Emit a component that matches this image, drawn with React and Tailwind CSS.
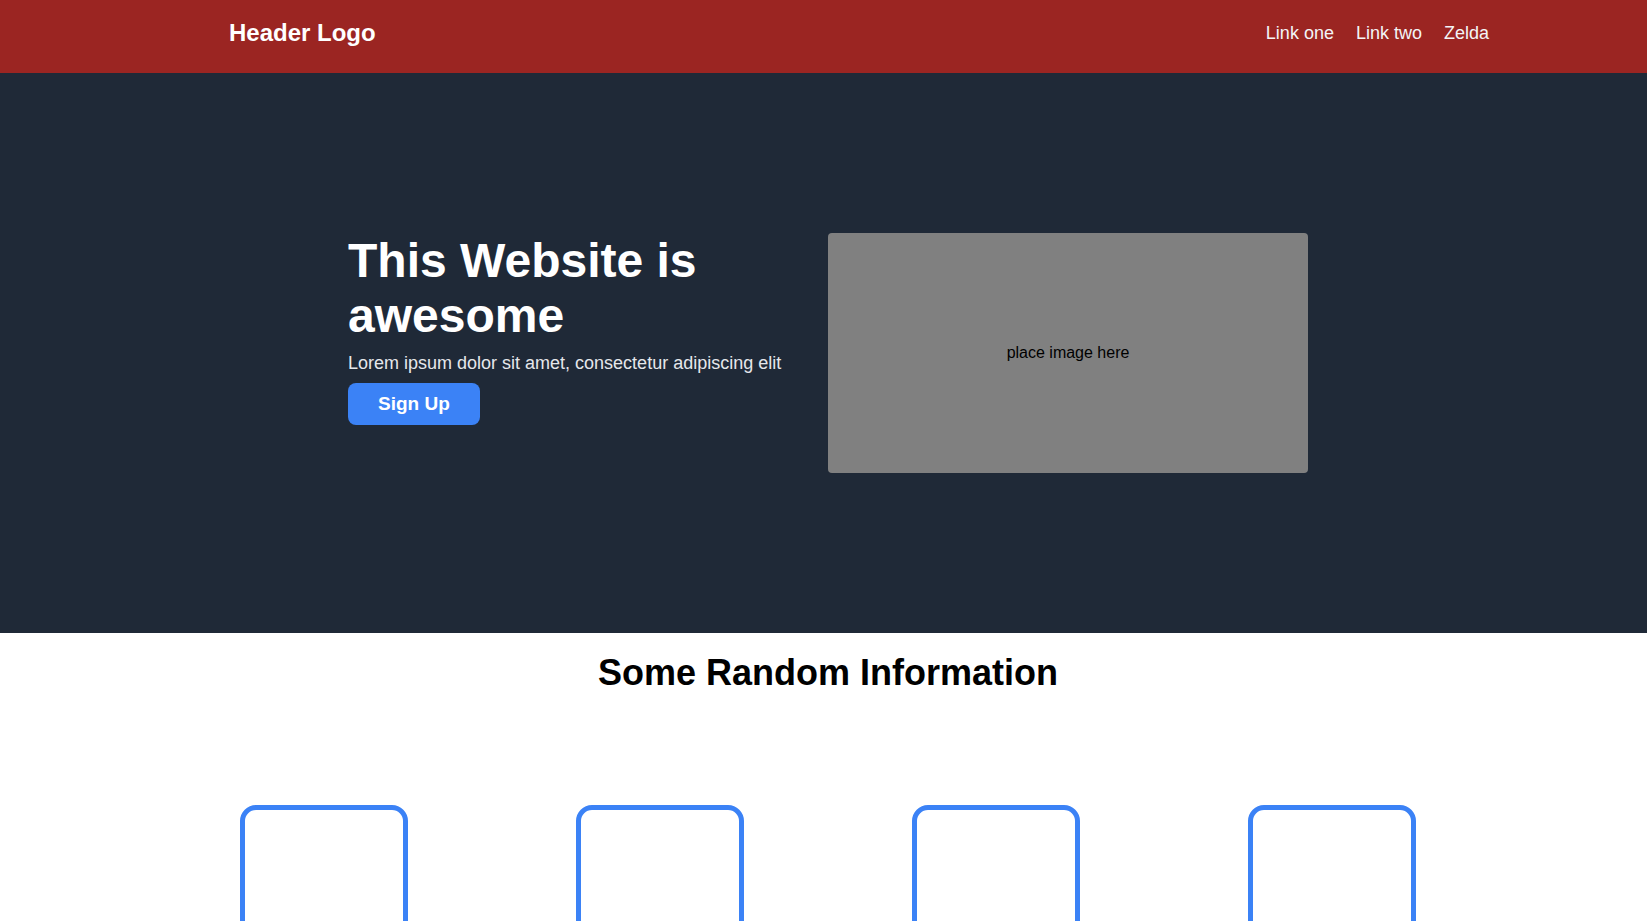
const links = ["Link one", "Link two", "Zelda"];

function Header() {
  return (
    <header className="flex h-[73px] items-start justify-between bg-[#9b2522] pl-[229px] pr-[158px] pt-[19px]">
      <div className="text-2xl leading-[28px] font-bold text-white">Header Logo</div>
      <nav className="flex gap-[22px]">
        {links.map(link => (
          <a key={link} href="#" className="text-lg leading-[28px] text-gray-100">
            {link}
          </a>
        ))}
      </nav>
    </header>
  );
}

function Hero() {
  return (
    <section className="flex h-[560px] items-center justify-center bg-[#1f2937] pl-[9px]">
      <div className="flex w-[960px] items-start justify-between">
        <div className="flex w-[460px] flex-col items-start">
          <h1 className="text-[48px] leading-[1.15] font-bold text-white">
            This Website is awesome
          </h1>
          <p className="mt-[6px] text-lg leading-[28px] text-gray-200">
            Lorem ipsum dolor sit amet, consectetur adipiscing elit
          </p>
          <button className="mt-[6px] rounded-lg bg-[#3b82f6] px-[30px] py-[10px] text-[19px] leading-[22px] font-bold text-white">
            Sign Up
          </button>
        </div>
        <div className="flex h-[240px] w-[480px] items-center justify-center rounded bg-[#808080] text-base text-black">
          place image here
        </div>
      </div>
    </section>
  );
}

function Info() {
  return (
    <section className="flex flex-col items-center bg-white pl-[9px]">
      <h2 className="mt-5 text-4xl font-bold text-black">Some Random Information</h2>
      <div className="mt-[112px] grid w-[1344px] grid-cols-4">
        {[1, 2, 3, 4].map(i => (
          <div key={i} className="mx-auto h-[200px] w-[168px] rounded-2xl border-[5px] border-[#3b82f6]"></div>
        ))}
      </div>
    </section>
  );
}

export default function App() {
  return (
    <div className="h-[921px] overflow-hidden bg-white font-['Liberation_Sans',Arial,sans-serif]">
      <Header />
      <Hero />
      <Info />
    </div>
  );
}
